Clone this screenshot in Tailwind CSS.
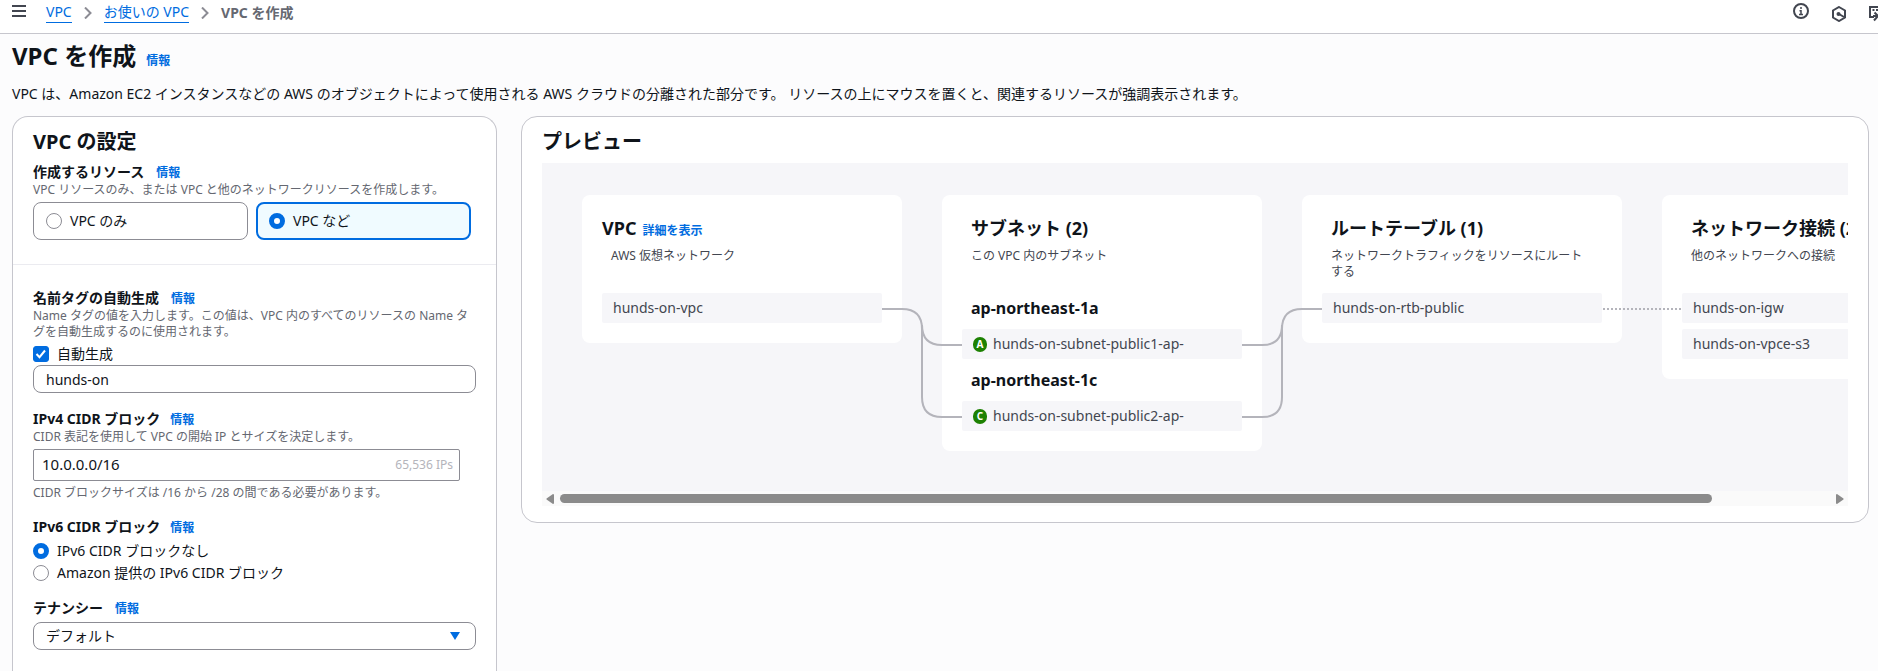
<!DOCTYPE html>
<html lang="ja">
<head>
<meta charset="utf-8">
<meta name="viewport" content="width=device-width, initial-scale=1">
<title>VPC を作成</title>
<script src="https://cdn.jsdelivr.net/npm/@tailwindcss/browser@4"></script>
</head>
<body class="bg-[#fcfcfd] text-[#0f141a] text-sm font-['Noto_Sans','Noto_Sans_CJK_JP',sans-serif]">
<div class="flex h-screen flex-col overflow-hidden">
  <header class="flex h-[34px] shrink-0 items-start justify-between border-b border-[#c6c6cd] bg-white pl-3">
    <div class="flex items-start">
      <button type="button" aria-label="メニュー" class="pt-[5px]">
        <svg class="block h-3 w-3.5" viewBox="0 0 14 12" stroke="#424650" stroke-width="2"><path d="M0 1h14M0 6h14M0 11h14"/></svg>
      </button>
      <nav aria-label="パンくずリスト" class="ml-5 pt-0.5">
        <ol class="flex items-center leading-5">
          <li><a href="#" class="block border-b border-[#006ce0] text-[#006ce0]">VPC</a></li>
          <li aria-hidden="true" class="px-3"><svg class="h-3 w-2" viewBox="0 0 8 12" fill="none" stroke="#8c8c94" stroke-width="2"><path d="M1 .5L6.500 6L1 11.500"/></svg></li>
          <li><a href="#" class="block border-b border-[#006ce0] text-[#006ce0]">お使いの VPC</a></li>
          <li aria-hidden="true" class="px-3"><svg class="h-3 w-2" viewBox="0 0 8 12" fill="none" stroke="#8c8c94" stroke-width="2"><path d="M1 .5L6.500 6L1 11.500"/></svg></li>
          <li class="font-bold text-[#656871]">VPC を作成</li>
        </ol>
      </nav>
    </div>
    <div class="-mr-[7px] flex items-start gap-[22px] pt-[3px]">
      <button type="button" aria-label="情報パネル">
        <svg class="block h-4 w-4" viewBox="0 0 16 16" fill="none" stroke="#424650" stroke-width="2"><circle cx="8" cy="8" r="7"/><path d="M8 4v2M8 7v4.500M6.500 7.800h2M6 11.500h4" stroke-width="1.500"/></svg>
      </button>
      <button type="button" aria-label="診断" class="pt-[3px]">
        <svg class="block h-4 w-4" viewBox="0 0 16 16" fill="none" stroke="#424650" stroke-width="2"><path d="M8 1l6 3.500v7L8 15l-6-3.500v-7z"/><circle cx="7.500" cy="8" r="2" fill="#424650" stroke="none"/><path d="M8 8l5 3"/></svg>
      </button>
      <button type="button" aria-label="CloudShell" class="pt-[3px]">
        <svg class="block h-4 w-4" viewBox="0 0 16 16" fill="none" stroke="#424650" stroke-width="2"><path d="M5 11H1V1h14v10M3.500 4h2M7 4h2M10.500 4h2M4 10h5M5 14.500l4-4.500L5.500 6.500"/></svg>
      </button>
    </div>
  </header>

  <main class="flex min-h-0 flex-1 flex-col pl-3 pr-[9px]">
    <div class="flex items-baseline gap-2.5 pt-1.5 leading-8">
      <h1 class="text-2xl leading-8 font-bold">VPC を作成</h1>
      <a href="#" class="text-xs font-bold text-[#006ce0]">情報</a>
    </div>
    <p class="my-3 leading-5">VPC は、Amazon EC2 インスタンスなどの AWS のオブジェクトによって使用される AWS クラウドの分離された部分です。 リソースの上にマウスを置くと、関連するリソースが強調表示されます。</p>

    <div class="flex min-h-0 flex-1 items-start gap-6">
      <form class="h-full w-[485px] shrink-0 rounded-t-2xl border border-b-0 border-[#c6c6cd] bg-white">
        <section class="border-b border-[#ebebf0] px-5 pt-[13px] pb-6">
          <h2 class="text-xl leading-6 font-bold">VPC の設定</h2>
          <fieldset>
            <legend class="flex items-baseline gap-3 pt-2 leading-5 font-bold">作成するリソース <a href="#" class="text-xs text-[#006ce0]">情報</a></legend>
            <p class="text-xs leading-4 text-[#656871]">VPC リソースのみ、または VPC と他のネットワークリソースを作成します。</p>
            <div class="mt-1 mr-[5px] grid grid-cols-2 gap-2">
              <label class="flex h-[38px] items-center gap-2 rounded-lg border border-[#8c8c94] px-3">
                <input type="radio" name="res" class="h-4 w-4 appearance-none rounded-full border border-[#8c8c94] bg-white checked:border-[5px] checked:border-[#006ce0]">VPC のみ</label>
              <label class="flex h-[38px] items-center gap-2 rounded-lg border-2 border-[#006ce0] bg-[#f0fbff] px-[11px]">
                <input type="radio" name="res" checked class="h-4 w-4 appearance-none rounded-full border border-[#8c8c94] bg-white checked:border-[5px] checked:border-[#006ce0]">VPC など</label>
            </div>
          </fieldset>
        </section>

        <section class="px-5 pt-[23px]">
          <div class="flex items-baseline gap-3 leading-5 font-bold"><label for="tag">名前タグの自動生成</label><a href="#" class="text-xs text-[#006ce0]">情報</a></div>
          <p class="text-xs leading-4 text-[#656871]">Name タグの値を入力します。この値は、VPC 内のすべてのリソースの Name タグを自動生成するのに使用されます。</p>
          <label class="mt-1 flex h-5 items-center">
            <span class="relative mr-2 block h-4 w-4">
              <input type="checkbox" checked class="block h-4 w-4 appearance-none rounded-[3px] border border-[#8c8c94] checked:border-[#006ce0] checked:bg-[#006ce0]">
              <svg class="pointer-events-none absolute inset-0" viewBox="0 0 16 16" fill="none" stroke="#fff" stroke-width="2"><path d="M3.500 8l3 3.200L12 4.500"/></svg>
            </span>自動生成</label>
          <input id="tag" type="text" value="hunds-on" class="mt-px block h-7 w-full rounded-lg border border-[#8c8c94] bg-white px-3">

          <div class="mt-4 flex items-baseline gap-2.5 leading-5 font-bold"><label for="cidr">IPv4 CIDR ブロック</label><a href="#" class="text-xs text-[#006ce0]">情報</a></div>
          <p class="text-xs leading-4 text-[#656871]">CIDR 表記を使用して VPC の開始 IP とサイズを決定します。</p>
          <div class="mt-1 mr-4 flex h-8 items-center rounded-xs border border-[#8c8c94] bg-white pr-1.5 pl-2">
            <input id="cidr" type="text" value="10.0.0.0/16" class="min-w-0 flex-1 text-[15px] outline-none">
            <span class="text-xs text-[#b4b4bb]">65,536 IPs</span>
          </div>
          <p class="mt-1 text-xs leading-4 text-[#656871]">CIDR ブロックサイズは /16 から /28 の間である必要があります。</p>

          <fieldset class="mt-4">
            <legend class="mb-[3px] flex items-baseline gap-2.5 leading-5 font-bold">IPv6 CIDR ブロック <a href="#" class="text-xs text-[#006ce0]">情報</a></legend>
            <label class="flex h-[22px] items-center gap-2">
              <input type="radio" name="v6" checked class="h-4 w-4 appearance-none rounded-full border border-[#8c8c94] bg-white checked:border-[5px] checked:border-[#006ce0]">IPv6 CIDR ブロックなし</label>
            <label class="flex h-[22px] items-center gap-2">
              <input type="radio" name="v6" class="h-4 w-4 appearance-none rounded-full border border-[#8c8c94] bg-white checked:border-[5px] checked:border-[#006ce0]">Amazon 提供の IPv6 CIDR ブロック</label>
          </fieldset>

          <div class="mt-3.5 flex items-baseline gap-3 leading-5 font-bold"><label for="ten">テナンシー</label><a href="#" class="text-xs text-[#006ce0]">情報</a></div>
          <div class="relative mt-1">
            <select id="ten" class="block h-7 w-full appearance-none rounded-lg border border-[#8c8c94] bg-white px-3"><option>デフォルト</option></select>
            <svg class="pointer-events-none absolute top-2.5 right-4 h-2 w-2.5" viewBox="0 0 10 8" fill="#006ce0"><path d="M0 0h10L5 8z"/></svg>
          </div>
        </section>
      </form>

      <section class="min-w-0 flex-1 rounded-2xl border border-[#c6c6cd] bg-white px-5 pt-[13px] pb-4">
        <h2 class="mb-[9px] text-xl leading-6 font-bold">プレビュー</h2>
        <div class="overflow-hidden bg-[#f6f6f9]">
          <div class="relative flex w-max items-start gap-10 px-10 pt-8 pb-10">
            <article class="w-80 rounded-lg bg-white px-5 pt-[19px] pb-5">
              <div class="flex items-baseline gap-1.5 leading-7"><h3 class="text-lg leading-7 font-bold">VPC</h3><a href="#" class="text-xs font-bold text-[#006ce0]">詳細を表示</a></div>
              <p class="mt-1.5 mb-3 h-[33px] px-[9px] text-xs leading-4 text-[#424650]">AWS 仮想ネットワーク</p>
              <div class="flex h-[30px] items-center rounded-xs bg-[#f6f6f9] px-[11px] text-[#424650]">hunds-on-vpc</div>
            </article>

            <article class="w-80 rounded-lg bg-white px-5 pt-[19px] pb-5">
              <h3 class="px-[9px] text-lg leading-7 font-bold">サブネット (2)</h3>
              <p class="mt-1.5 mb-3 h-[33px] px-[9px] text-xs leading-4 text-[#424650]">この VPC 内のサブネット</p>
              <div class="flex flex-col gap-1.5">
                <h4 class="flex h-[30px] items-center px-[9px] text-base font-bold">ap-northeast-1a</h4>
                <div class="flex h-[30px] items-center gap-1.5 rounded-xs bg-[#f6f6f9] px-[11px] text-[#424650]"><span class="flex h-[15px] w-3.5 items-center justify-center rounded-full bg-[#1d8102] text-[10px] font-bold text-white">A</span>hunds-on-subnet-public1-ap-</div>
                <h4 class="flex h-[30px] items-center px-[9px] text-base font-bold">ap-northeast-1c</h4>
                <div class="flex h-[30px] items-center gap-1.5 rounded-xs bg-[#f6f6f9] px-[11px] text-[#424650]"><span class="flex h-[15px] w-3.5 items-center justify-center rounded-full bg-[#1d8102] text-[10px] font-bold text-white">C</span>hunds-on-subnet-public2-ap-</div>
              </div>
            </article>

            <article class="w-80 rounded-lg bg-white px-5 pt-[19px] pb-5">
              <h3 class="px-[9px] text-lg leading-7 font-bold">ルートテーブル (1)</h3>
              <p class="mt-1.5 mb-3 h-[33px] px-[9px] text-xs leading-4 text-[#424650]">ネットワークトラフィックをリソースにルートする</p>
              <div class="flex h-[30px] items-center rounded-xs bg-[#f6f6f9] px-[11px] text-[#424650]">hunds-on-rtb-public</div>
            </article>

            <article class="w-80 rounded-lg bg-white px-5 pt-[19px] pb-5">
              <h3 class="px-[9px] text-lg leading-7 font-bold">ネットワーク接続 (2)</h3>
              <p class="mt-1.5 mb-3 h-[33px] px-[9px] text-xs leading-4 text-[#424650]">他のネットワークへの接続</p>
              <div class="flex flex-col gap-1.5">
                <div class="flex h-[30px] items-center rounded-xs bg-[#f6f6f9] px-[11px] text-[#424650]">hunds-on-igw</div>
                <div class="flex h-[30px] items-center rounded-xs bg-[#f6f6f9] px-[11px] text-[#424650]">hunds-on-vpce-s3</div>
              </div>
            </article>

            <svg class="pointer-events-none absolute top-0 left-0 h-[328px] w-[1480px]" viewBox="0 0 1480 328" fill="none" stroke="#b4b4bb" stroke-width="2">
              <path d="M340 146h20q20 0 20 20v68q0 20 20 20h20M380 162q0 20 20 20h20"/>
              <path d="M780 146h-20q-20 0-20 20v68q0 20-20 20h-20M740 162q0 20-20 20h-20" />
              <path d="M1061 146h79" stroke-dasharray="2 2"/>
            </svg>
          </div>
        </div>
        <div class="flex h-[15px] items-center bg-[#fafafa] px-1">
          <button type="button" aria-label="左へスクロール"><svg class="block h-2.5 w-2" viewBox="0 0 8 10" fill="#8b8b8b"><path d="M8 1v8q0 1-1 1L.5 5.500V4.500L7 0q1 0 1 1z"/></svg></button>
          <div class="mx-1.5 flex-1"><div class="h-[9px] rounded-full bg-[#8b8b8b]" style="width:90.700%"></div></div>
          <button type="button" aria-label="右へスクロール"><svg class="block h-2.5 w-2" viewBox="0 0 8 10" fill="#8b8b8b"><path d="M0 1v8q0 1 1 1l6.500-4.500V4.500L1 0Q0 0 0 1z"/></svg></button>
        </div>
      </section>
    </div>
  </main>
</div>
</body>
</html>
